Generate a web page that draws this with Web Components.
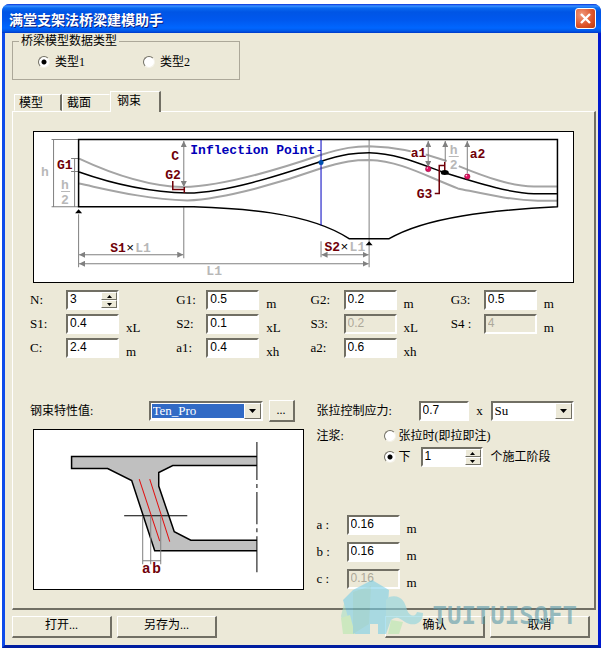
<!DOCTYPE html>
<html lang="zh-CN">
<head>
<meta charset="utf-8">
<title>满堂支架法桥梁建模助手</title>
<style>
  body {
    margin: 0;
    padding: 4px 2px 3px;
    background: #fff;
    color: #000;
    font: 12px/16px "Liberation Serif", "Noto Sans CJK SC", serif;
    --face: #ece9d8;
    --sunken: #716f64 #fff #fff #716f64;
    --raised: #fff #716f64 #716f64 #fff;
  }
</style>
</head>
<body>
<xp-window caption="满堂支架法桥梁建模助手">
  <type-group></type-group>
  <xp-tabs>
    <tendon-page></tendon-page>
  </xp-tabs>
  <xp-button slot="left">打开...</xp-button>
  <xp-button slot="left">另存为...</xp-button>
  <xp-button slot="right">确认</xp-button>
  <xp-button slot="right">取消</xp-button>
  <brand-mark slot="mark"></brand-mark>
</xp-window>

<script>
const base = `
  *, :host { box-sizing: border-box; }
  label, legend { color: #000; }
  input, select, button { font: inherit; color: inherit; margin: 0; border-radius: 0; }
  input[type=text] {
    width: 100%; height: 20px; padding: 0 2px 2px; line-height: 16px;
    background: #fff; border: 2px solid; border-color: var(--sunken);
    font-family: "Liberation Sans", sans-serif; outline: 0;
  }
  input[type=text]:disabled { background: var(--face); color: #aca899; }
  input[type=radio] {
    appearance: none; width: 12px; height: 12px; flex: none; border-radius: 50%;
    background: #fff; border: 1px solid; border-color: #716f64 #f4f2e8 #f4f2e8 #716f64;
  }
  input[type=radio]:checked { background: radial-gradient(circle, #000 0 2px, #fff 3px); }
`;

function define(name, markup, setup) {
  const t = document.createElement('template');
  customElements.define(name, class extends HTMLElement {
    constructor() {
      super();
      this.attachShadow({ mode: 'open' });
    }
    connectedCallback() {
      if (this.shadowRoot.firstChild) return;
      t.innerHTML = `<style>${base}</style>${markup}`;
      this.shadowRoot.append(t.content.cloneNode(true));
      if (setup) setup(this, this.shadowRoot);
    }
  });
}

define('xp-window', `
  <style>
    :host { display: block; position: relative; background: var(--face);
      border: solid #0831d9; border-width: 0 3px 3px; border-color: #0831d9 #0019cf #001ea0 #0d4bea;
      border-radius: 8px 8px 0 0; }
    header { display: flex; align-items: center; justify-content: space-between; height: 29px;
      margin: 0 -3px; padding: 0 5px 0 7px; border-radius: 7px 7px 0 0;
      background: linear-gradient(#0831d9 0, #3a93ff 2px, #0a6af0 4px, #0055e5 8px, #0058ee 16px, #0066ff 24px, #0057e7 27px, #0038c8 29px); }
    h1 { margin: 0; font: bold 14px/20px "Noto Sans CJK SC", sans-serif; color: #fff; text-shadow: 1px 1px #0a1f80; }
    .close { width: 21px; height: 21px; padding: 0; border: 1px solid #fff; border-radius: 3px;
      background: radial-gradient(circle at 30% 30%, #f09a7c, #dd5228 60%, #b93a10); }
    .close svg { display: block; margin: auto; }
    main { padding: 2px 2px 0 7px; }
    footer { display: flex; justify-content: space-between; padding: 6px 8px 7px 7px; }
    footer div { display: flex; gap: 5px; }
  </style>
  <header><h1></h1>
    <button class="close" aria-label="关闭"><svg width="13" height="13" viewBox="0 0 13 13"><path d="M2 2 11 11M11 2 2 11" stroke="#fff" stroke-width="2.4"/></svg></button>
  </header>
  <main><slot></slot></main>
  <footer><div><slot name="left"></slot></div><div><slot name="right"></slot></div></footer>
  <slot name="mark"></slot>
`, (host, root) => { root.querySelector('h1').textContent = host.getAttribute('caption'); });

define('type-group', `
  <style>
    :host { display: block; max-width: 228px; }
    fieldset { margin: 0; padding: 7px 26px 9px 25px; min-width: 0; border: 1px solid #aca899; }
    legend { margin-left: -19px; padding: 0 2px; line-height: 12px; }
    div { display: grid; grid-template-columns: 1fr 70px; }
    label { display: flex; align-items: center; gap: 5px; }
  </style>
  <fieldset><legend>桥梁模型数据类型</legend>
    <div>
      <label><input type="radio" name="type" checked>类型1</label>
      <label><input type="radio" name="type">类型2</label>
    </div>
  </fieldset>
`);

define('xp-tabs', `
  <style>
    :host { display: block; margin-top: 11px; }
    nav { display: flex; align-items: flex-end; padding-left: 2px; }
    button { height: 17px; width: 48px; padding: 0 0 0 4px; text-align: left; line-height: 14px; background: var(--face);
      border: 1px solid; border-color: #fff transparent transparent #fff; }
    button:first-child { border-right: 2px solid #716f64; }
    button.on { width: 51px; height: 21px; margin-bottom: -1px; padding: 0 0 3px 6px;
      border-right: 2px solid #716f64; border-bottom: 0; }
    section { border: solid; border-width: 1px 2px 2px 1px; border-color: var(--raised); }
  </style>
  <nav role="tablist"><button role="tab">模型</button><button role="tab">截面</button><button role="tab" class="on" aria-selected="true">钢束</button></nav>
  <section><slot></slot></section>
`);

define('xp-button', `
  <style>
    :host { display: block; width: 100px; }
    button { width: 100%; height: 22px; padding: 0 0 2px; background: var(--face); border: solid; border-width: 1px 2px 2px 1px; border-color: var(--raised); }
  </style>
  <button><slot></slot></button>
`);

define('xp-field', `
  <style>
    :host { display: flex; height: 20px; align-items: flex-end; }
    label { width: var(--label, 33px); flex: none; align-self: center; font-size: 13px; }
    input[type=text] { width: 53px; flex: none; }
    span { padding-left: 7px; line-height: 12px; font-size: 13px; }
  </style>
  <label for="v"></label><input type="text" id="v"><span></span>
`, (host, root) => {
  root.querySelector('label').textContent = host.getAttribute('label');
  root.querySelector('span').textContent = host.getAttribute('unit');
  const v = root.querySelector('input');
  v.value = host.getAttribute('value');
  v.disabled = host.hasAttribute('disabled');
});

define('xp-spin', `
  <style>
    :host { display: flex; align-items: center; height: 20px; }
    label { width: var(--label, 0); flex: none; font-size: 13px; }
    div { display: flex; width: var(--box, 53px); height: 20px; background: #fff; border: 2px solid; border-color: var(--sunken); }
    input[type=text] { flex: 1; min-width: 0; height: 16px; border: 0; padding: 0 2px 2px; }
    p { margin: 0; width: 16px; display: flex; flex-direction: column; }
    button { height: 8px; padding: 0; background: var(--face); border: 1px solid; border-color: var(--raised); }
    svg { display: block; margin: auto; }
  </style>
  <label for="v"></label>
  <div><input type="text" id="v" inputmode="numeric"><p>
    <button aria-label="增加"><svg width="5" height="3"><path d="M0 3 2.5 0 5 3z"/></svg></button>
    <button aria-label="减少"><svg width="5" height="3"><path d="M0 0 2.5 3 5 0z"/></svg></button></p></div>
`, (host, root) => {
  const l = root.querySelector('label');
  l.textContent = host.getAttribute('label') || '';
  const v = root.querySelector('input');
  v.value = host.getAttribute('value');
  if (!l.textContent) { l.remove(); v.setAttribute('aria-label', host.getAttribute('name')); }
});

define('xp-select', `
  <style>
    :host { display: block; position: relative; height: 20px; }
    select { appearance: none; width: 100%; height: 20px; padding: 0 18px 0 2px; background: #fff; border: 2px solid; border-color: var(--sunken); outline: 0; font-size: 13px; line-height: 14px; }
    :host([focused]) select { color: #fff; background: #316ac5; box-shadow: inset 0 0 0 1px #fff; }
    i { position: absolute; right: 2px; top: 2px; width: 17px; height: 16px; display: grid; place-items: center; pointer-events: none;
      background: var(--face); border: 1px solid; border-color: var(--raised); }
  </style>
  <select><option></option></select><i><svg width="7" height="4"><path d="M0 0H7L3.5 4z"/></svg></i>
`, (host, root) => {
  root.querySelector('option').textContent = host.getAttribute('value');
  root.querySelector('select').setAttribute('aria-label', host.getAttribute('name'));
});

define('grout-options', `
  <style>
    :host { display: grid; grid-template-columns: 67px 1fr; row-gap: 1px; line-height: 20px; white-space: nowrap; }
    .row { display: flex; align-items: center; height: 20px; }
    label { display: flex; align-items: center; gap: 3px; }
    xp-spin { margin: 0 8px 0 10px; --box: 62px; }
    .b { grid-column: 2; }
  </style>
  <span>注浆:</span>
  <div class="row"><label><input type="radio" name="g">张拉时(即拉即注)</label></div>
  <div class="row b"><label><input type="radio" name="g" checked>下</label><xp-spin name="施工阶段" value="1"></xp-spin>个施工阶段</div>
`);

define('profile-diagram', `
  <style>
    :host { display: block; background: #fff; border: 1px solid #000; }
    svg { display: block; width: 100%; height: auto; }
    text { font: bold 13px "Liberation Mono", monospace; fill: #700008; }
    text.g { fill: #b8b8b8; } text.ip { fill: #0000b8; } text.x { fill: #000; font-weight: 400; }
    .dim { stroke: #808080; fill: none; }
    .both path { marker-start: url(#e); marker-end: url(#e); }
    .out { stroke: #000; fill: none; stroke-width: 1.5; } .duct { stroke: #a4a4a4; fill: none; stroke-width: 2; }
    .lead { stroke: #700008; fill: none; stroke-width: 1.5; }
  </style>
  <svg viewBox="34 132 538 150" role="img" aria-label="钢束纵向布置图">
    <defs><marker id="e" viewBox="0 0 6 6" refX="6" refY="3" markerWidth="6" markerHeight="6" orient="auto-start-reverse"><path d="M0 0 6 3 0 6z" fill="#808080"/></marker></defs>
    <path class="dim" d="M51.5 139.5H78M51.5 206.5H78M53.5 139.5V206.5M74.5 158.5V206.5M71 158.5H79M71 171.5H79M78.5 214V267M183.5 207V258M320.5 241V257M368.5 140V267"/>
    <g class="dim">
      <path d="M79 254.5H183" marker-start="url(#e)" marker-end="url(#e)"/>
      <path d="M79 263.5H368" marker-start="url(#e)" marker-end="url(#e)"/>
      <path d="M321 254.5H368" marker-start="url(#e)" marker-end="url(#e)"/>
      <path d="M183.5 141V187" marker-start="url(#e)" marker-end="url(#e)"/>
    </g>
    <path class="duct" d="M79 158.5C110 173 145 186 183 187C225 186 285 167 320 155C343 147.5 355 146.3 368.5 146.3C395 147 420 152 446 161M458 166C485 177 510 186 533 186.5H556"/>
    <path class="duct" d="M79 183.5C110 190 145 199 187 200.3C225 199 285 181 320 168.5C343 161 355 160 368.5 160C400 161 425 176 457 188.3C485 194 510 200 537 200.7H556"/>
    <path class="out" d="M79 172C110 183 145 192 187 193C230 192 285 173 320 161.5C343 154 355 152.7 368.5 152.7C395 153 420 164 444 172.7C480 184 510 193 533 193.6H556"/>
    <path class="out" d="M78.5 206.5V139.5H556.5V206.5C490 210 425 217 388.5 238.5H348.5C305 210 230 208 190 206.5Z"/>
    <path d="M320.5 140V225M317 150.5H320" stroke="#0000c0"/>
    <circle cx="320.5" cy="162.5" r="2.5" fill="#0050b0"/>
    <g class="dim">
      <path d="M427.5 141V167" marker-start="url(#e)" marker-end="url(#e)"/>
      <path d="M444.5 141V162" marker-start="url(#e)"/>
      <path d="M466.5 141V173" marker-start="url(#e)"/>
    </g>
    <path class="lead" d="M172.5 181V189.5H183.5M184 187V193M434 193.5H438.5V165.5H443.5M444 162V172"/>
    <ellipse cx="444" cy="172.5" rx="4" ry="2.5"/>
    <g fill="#e01060" stroke="#800030" stroke-width=".5"><circle cx="427.5" cy="169" r="2.7"/><circle cx="466.5" cy="176.5" r="2.7"/></g>
    <g fill="#fff" opacity=".8"><circle cx="426.6" cy="168" r=".8"/><circle cx="465.6" cy="175.5" r=".8"/></g>
    <path d="M78.5 209 82 213H75ZM368.5 241 372 245H365Z"/>
    <path d="M61 191.5H70M448 156.5H458" stroke="#b8b8b8"/>
    <rect x="410" y="146" width="15" height="12" fill="#fff"/>
    <text x="57" y="169">G1</text><text x="171" y="160">C</text><text x="165" y="179">G2</text>
    <text class="ip" x="190" y="154">Inflection Point</text>
    <text x="410" y="157">a1</text><text x="469" y="158">a2</text><text x="416" y="198">G3</text>
    <text x="110" y="252">S1</text><text x="324" y="251">S2</text>
    <text class="x" x="126" y="252">×</text><text class="x" x="340" y="251">×</text>
    <text class="g" x="135" y="252">L1</text><text class="g" x="349" y="251">L1</text><text class="g" x="206" y="275">L1</text>
    <text class="g" x="41" y="176">h</text><text class="g" x="61" y="189">h</text><text class="g" x="61" y="204">2</text>
    <text class="g" x="449" y="154">h</text><text class="g" x="449" y="169">2</text>
  </svg>
`);

define('section-diagram', `
  <style>
    :host { display: block; background: #fff; border: 1px solid #000; }
    svg { display: block; width: 100%; height: auto; }
    text { font: bold 14px "Liberation Sans", sans-serif; fill: #700008; }
  </style>
  <svg viewBox="34 430 268 158" role="img" aria-label="腹板钢束断面图" fill="none">
    <path fill="#c0c0c0" d="M71.5 456.5H256.5V465.5H172.5L158.5 472.5V486L174 531.5 190.5 540H256.5V550.5H154.5L131.5 480.5 107.5 468.5H71.5Z"/>
    <path stroke="#000" stroke-width="1.5" d="M256.5 456.5H71.5V468.5H107.5L131.5 480.5 154.5 550.5H256.5M256.5 465.5H172.5L158.5 472.5V486L174 531.5 190.5 540H256.5"/>
    <path stroke="#000" d="M256.5 442V480M256.5 484V488M256.5 492V524M256.5 528V532M256.5 536V572M124 515.5H187"/>
    <path stroke="#e01010" d="M139 479 159.5 541M149.5 479 169.5 541.5"/>
    <path stroke="#808080" d="M142.5 516V564M150.5 516V564M160.5 516V564M142 560.5H161"/>
    <text x="142" y="573">a</text><text x="152" y="573">b</text>
  </svg>
`);

define('tendon-page', `
  <style>
    :host { display: block; padding: 19px 20px 18px 17px; }
    profile-diagram { margin: 0 0 7px 3px; }
    .fields { display: grid; grid-template-columns: 146fr 134fr 140fr 123fr; row-gap: 4px; }
    .fields > :nth-child(4n+1) { --label: 36px; }
    .fields > :nth-child(4n+2) { --label: 30px; }
    .lower { display: grid; grid-template-columns: minmax(0, 273fr) minmax(0, 257fr); column-gap: 13px; margin-top: 43px; }
    .bar { display: flex; align-items: center; height: 20px; }
    .bar > span { flex: 1; }
    .bar xp-select { width: 114px; }
    .bar xp-button { width: 26px; margin-left: 6px; margin-right: 9px; }
    section-diagram { margin: 8px 0 0 3px; }
    .bar input[type=text] { width: 50px; flex: none; }
    .bar em { font-style: normal; font-size: 13px; width: 22px; flex: none; text-align: center; }
    .bar label { width: 102px; flex: none; }
    .right .bar xp-select { flex: 1; width: auto; }
    grout-options { margin-top: 5px; }
    .abc { display: grid; row-gap: 7px; margin-top: 48px; --label: 30px; }
  </style>
  <profile-diagram></profile-diagram>
  <div class="fields">
    <xp-spin label="N:" value="3"></xp-spin>
    <xp-field label="G1:" value="0.5" unit="m"></xp-field>
    <xp-field label="G2:" value="0.2" unit="m"></xp-field>
    <xp-field label="G3:" value="0.5" unit="m"></xp-field>
    <xp-field label="S1:" value="0.4" unit="xL"></xp-field>
    <xp-field label="S2:" value="0.1" unit="xL"></xp-field>
    <xp-field label="S3:" value="0.2" unit="xL" disabled></xp-field>
    <xp-field label="S4 :" value="4" unit="m" disabled></xp-field>
    <xp-field label="C:" value="2.4" unit="m"></xp-field>
    <xp-field label="a1:" value="0.4" unit="xh"></xp-field>
    <xp-field label="a2:" value="0.6" unit="xh"></xp-field>
  </div>
  <div class="lower">
    <div>
      <div class="bar"><span>钢束特性值:</span><xp-select focused name="钢束特性值" value="Ten_Pro"></xp-select><xp-button>...</xp-button></div>
      <section-diagram></section-diagram>
    </div>
    <div class="right">
      <div class="bar"><label for="su">张拉控制应力:</label><input type="text" id="su" value="0.7"><em>x</em><xp-select name="应力基准" value="Su"></xp-select></div>
      <grout-options></grout-options>
      <div class="abc">
        <xp-field label="a :" value="0.16" unit="m"></xp-field>
        <xp-field label="b :" value="0.16" unit="m"></xp-field>
        <xp-field label="c :" value="0.16" unit="m" disabled></xp-field>
      </div>
    </div>
  </div>
`);

define('brand-mark', `
  <style>
    :host { position: absolute; right: 21px; bottom: 11px; display: flex; align-items: flex-end; gap: 6px; pointer-events: none; opacity: .6; }
    span { margin-bottom: 6px; font: bold 24px/24px "DejaVu Sans Mono", monospace; color: #5c9aaa; }
    svg { display: block; }
  </style>
  <svg width="86" height="54" viewBox="0 0 86 54">
    <path d="M4 20 14 14 15 54H4L0 36Z" fill="#a8e0c8"/>
    <path d="M2 20 12 10 31 0 48 10 45 54H37V44H29V54H12Z" fill="#7cd0e8"/>
    <path d="M0 38 9 35 14 54H2ZM50 40 62 42 58 54H47Z" fill="#b8e8b0"/>
    <path d="M48 17C60 14 64 22 66 30C68 36 74 38 76 32L82 33C82 44 72 47 64 42C58 38 56 36 50 40L45 54V20Z" fill="#8cd4e0"/>
    <path d="M12 12 30 6 28 44 12 54Z" fill="#78c8d0"/>
  </svg><span>TUITUISOFT</span>
`);
</script>
</body>
</html>
